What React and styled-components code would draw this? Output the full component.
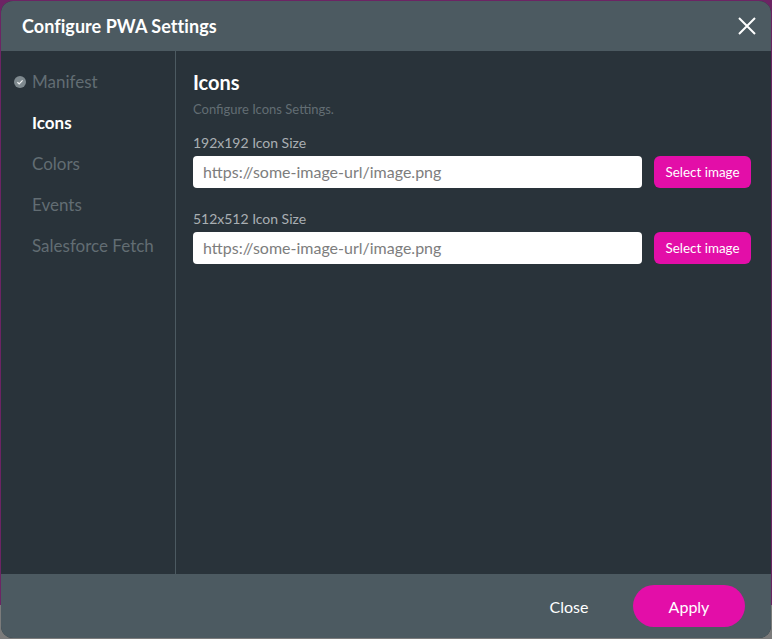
import React from 'react'
import styled, { createGlobalStyle } from 'styled-components'

const GlobalStyle = createGlobalStyle`
  html, body {
    margin: 0;
    padding: 0;
    background: #7b7b7b;
  }
  body {
    font-family: Lato, "Open Sans", sans-serif;
  }
`

const Backdrop = styled.div`
  width: 772px;
  height: 639px;
  padding: 1px;
  box-sizing: border-box;
  overflow: hidden;
  background: linear-gradient(to bottom, #6c2464 0, #6c2464 605px, #7b7b7b 605px);
`

const Modal = styled.div`
  width: 770px;
  height: 637px;
  border-radius: 12px;
  overflow: hidden;
  display: flex;
  flex-direction: column;
  background: #29333a;
`

const Header = styled.header`
  height: 50px;
  flex: none;
  display: flex;
  align-items: center;
  justify-content: space-between;
  padding: 0 15px 0 21px;
  background: #4c5a61;
`

const Title = styled.h1`
  margin: 0;
  font-size: 18px;
  letter-spacing: 0.05px;
  font-weight: 700;
  color: #fff;
`

const CloseIcon = styled.svg`
  width: 18px;
  height: 18px;
  display: block;
`

const Body = styled.div`
  flex: 1;
  display: flex;
  min-height: 0;
`

const Sidebar = styled.nav`
  width: 175px;
  flex: none;
  box-sizing: border-box;
  padding-top: 10px;
  border-right: 1px solid #4c5a61;
`

const NavItem = styled.div`
  position: relative;
  height: 41px;
  padding-left: 31px;
  display: flex;
  align-items: center;
  font-size: 17px;
  font-weight: ${p => (p.$active ? 700 : 400)};
  color: ${p => (p.$active ? '#fff' : '#626d73')};
`

const Check = styled.svg`
  position: absolute;
  left: 13px;
  top: 15px;
  width: 12px;
  height: 12px;
`

const Content = styled.main`
  flex: 1;
  padding: 19px 20px 0 17px;
`

const Heading = styled.h2`
  margin: 0;
  font-size: 20px;
  line-height: 24px;
  font-weight: 700;
  color: #fff;
`

const Hint = styled.p`
  margin: 7px 0 0;
  font-size: 13px;
  line-height: 16px;
  color: #626d73;
`

const Field = styled.div`
  margin-top: ${p => (p.$first ? '17px' : '22px')};
`

const Label = styled.label`
  display: block;
  font-size: 14px;
  line-height: 17px;
  letter-spacing: -0.02px;
  margin-bottom: 5px;
  color: #a9afb3;
`

const Row = styled.div`
  display: flex;
  align-items: center;
  gap: 12px;
`

const Input = styled.input`
  flex: 1;
  min-width: 0;
  height: 32px;
  box-sizing: border-box;
  padding: 0 10px 2px;
  border: 0;
  border-radius: 4px;
  background: #fff;
  font-family: inherit;
  font-size: 16px;
  color: #333;
  &::placeholder {
    color: #7d7d7d;
    opacity: 1;
  }
`

const SelectButton = styled.button`
  width: 97px;
  height: 32px;
  flex: none;
  padding: 0;
  border: 0;
  border-radius: 6px;
  background: #e30ea8;
  color: #fff;
  font-family: inherit;
  font-size: 13.4px;
`

const Footer = styled.footer`
  height: 64px;
  flex: none;
  display: flex;
  align-items: center;
  justify-content: flex-end;
  padding: 0 26px 0 0;
  background: #4c5a61;
`

const CloseButton = styled.button`
  width: 40px;
  padding: 0;
  margin-right: 44px;
  border: 0;
  background: none;
  color: #fff;
  font-family: inherit;
  font-size: 16px;
`

const ApplyButton = styled.button`
  width: 112px;
  height: 42px;
  padding: 0;
  border: 0;
  border-radius: 21px;
  background: #e30ea8;
  color: #fff;
  font-family: inherit;
  font-size: 16px;
`

const navItems = ['Manifest', 'Icons', 'Colors', 'Events', 'Salesforce Fetch']
const iconSizes = ['192x192', '512x512']

export default function App() {
  return (
    <Backdrop>
      <GlobalStyle />
      <Modal>
        <Header>
          <Title>Configure PWA Settings</Title>
          <CloseIcon viewBox="0 0 18 18" fill="none" stroke="#fff" strokeWidth="2">
            <path d="M1 1 L17 17 M17 1 L1 17" />
          </CloseIcon>
        </Header>
        <Body>
          <Sidebar>
            {navItems.map(item => (
              <NavItem key={item} $active={item === 'Icons'}>
                {item === 'Manifest' && (
                  <Check viewBox="0 0 12 12">
                    <circle cx="6" cy="6" r="6" fill="#7f8a8f" />
                    <path d="M3.4 6.2 L5.2 7.9 L8.6 4.4" fill="none" stroke="#eef0f1" strokeWidth="1.3" />
                  </Check>
                )}
                {item}
              </NavItem>
            ))}
          </Sidebar>
          <Content>
            <Heading>Icons</Heading>
            <Hint>Configure Icons Settings.</Hint>
            {iconSizes.map((size, i) => (
              <Field key={size} $first={i === 0}>
                <Label>{size} Icon Size</Label>
                <Row>
                  <Input placeholder="https://some-image-url/image.png" />
                  <SelectButton>Select image</SelectButton>
                </Row>
              </Field>
            ))}
          </Content>
        </Body>
        <Footer>
          <CloseButton>Close</CloseButton>
          <ApplyButton>Apply</ApplyButton>
        </Footer>
      </Modal>
    </Backdrop>
  )
}
